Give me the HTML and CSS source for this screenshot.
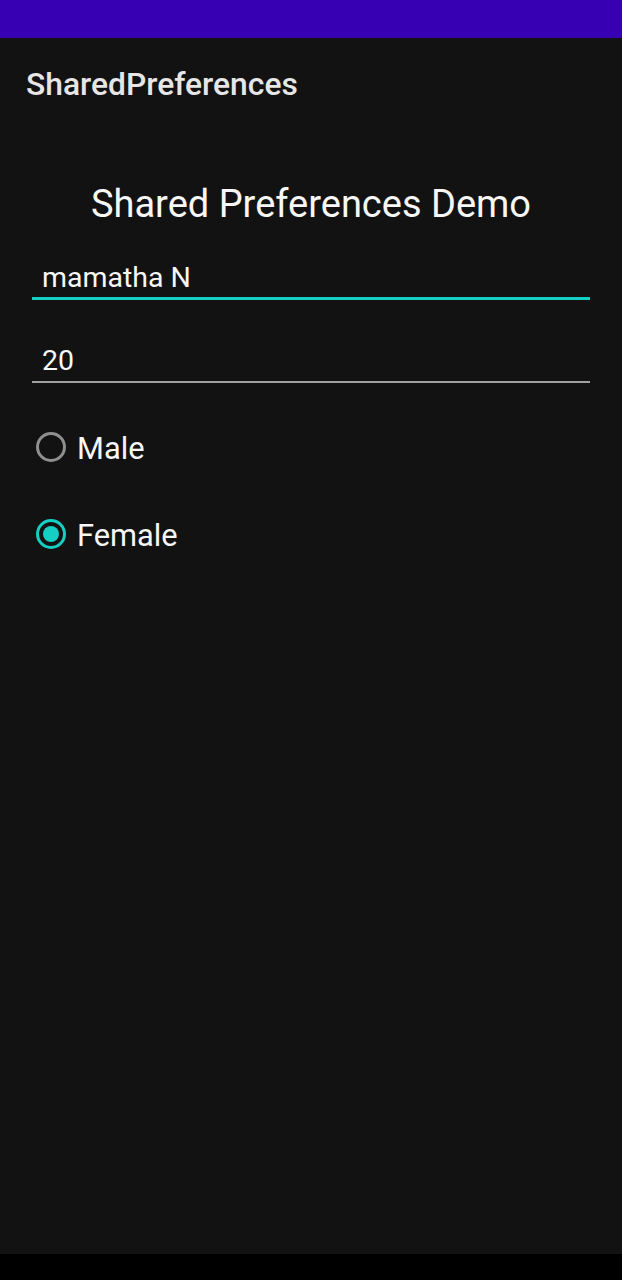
FILE: index.html
```html
<!DOCTYPE html>
<html>
<head>
<meta charset="utf-8">
<link rel="stylesheet" href="styles.css">
</head>
<body>
<div class="status-bar"></div>
<div class="app">
  <div class="toolbar">SharedPreferences</div>
  <div class="content">
    <h1 class="heading">Shared Preferences Demo</h1>
    <div class="field focused"><span class="field-text">mamatha N</span></div>
    <div class="field"><span class="field-text">20</span></div>
    <div class="radio-group">
      <div class="radio"><span class="radio-btn"></span><span class="radio-label">Male</span></div>
      <div class="radio checked"><span class="radio-btn"></span><span class="radio-label">Female</span></div>
    </div>
  </div>
</div>
<div class="nav-bar"></div>
</body>
</html>
```
FILE: styles.css
```css
html, body {
  margin: 0;
  padding: 0;
  height: 1280px;
  overflow: hidden;
}
body {
  display: flex;
  flex-direction: column;
  background: #121212;
  font-family: Roboto, "Liberation Sans", sans-serif;
  color: #f7f7f7;
}
.status-bar {
  height: 38px;
  background: #3700b3;
  flex: none;
}
.app {
  flex: 1;
  background: #121212;
}
.toolbar {
  height: 92px;
  padding: 27px 0 0 26px;
  box-sizing: border-box;
  font-size: 31.8px;
  font-weight: 500;
  line-height: 38px;
  color: #e6e6e6;
}
.content {
  padding: 0 32px;
}
.heading {
  margin: 51px 0 0 0;
  text-align: center;
  font-size: 38px;
  font-weight: 400;
  line-height: 46px;
}
.field {
  margin-top: 34px;
  padding: 0 0 3px 10px;
  border-bottom: 2px solid #a0a0a0;
}
.field.focused {
  padding-bottom: 2px;
  border-bottom: 3px solid #14cfc2;
}
.field + .field {
  margin-top: 44px;
}
.field-text {
  display: block;
  font-size: 28.5px;
  line-height: 34px;
}
.radio-group {
  margin-top: 49px;
  display: flex;
  flex-direction: column;
  gap: 57px;
}
.radio {
  display: flex;
  align-items: flex-start;
  height: 30px;
}
.radio-btn {
  width: 30px;
  height: 30px;
  flex: none;
  box-sizing: border-box;
  border: 3px solid #8f8f8f;
  border-radius: 50%;
  margin-left: 4px;
  position: relative;
}
.radio.checked .radio-btn {
  border-color: #14cfc2;
}
.radio.checked .radio-btn::after {
  content: "";
  position: absolute;
  left: 4px;
  top: 4px;
  width: 16px;
  height: 16px;
  border-radius: 50%;
  background: #14cfc2;
}
.radio-label {
  margin-left: 11px;
  font-size: 30.8px;
  line-height: 34px;
}
.nav-bar {
  height: 26px;
  background: #000000;
  flex: none;
}
```
